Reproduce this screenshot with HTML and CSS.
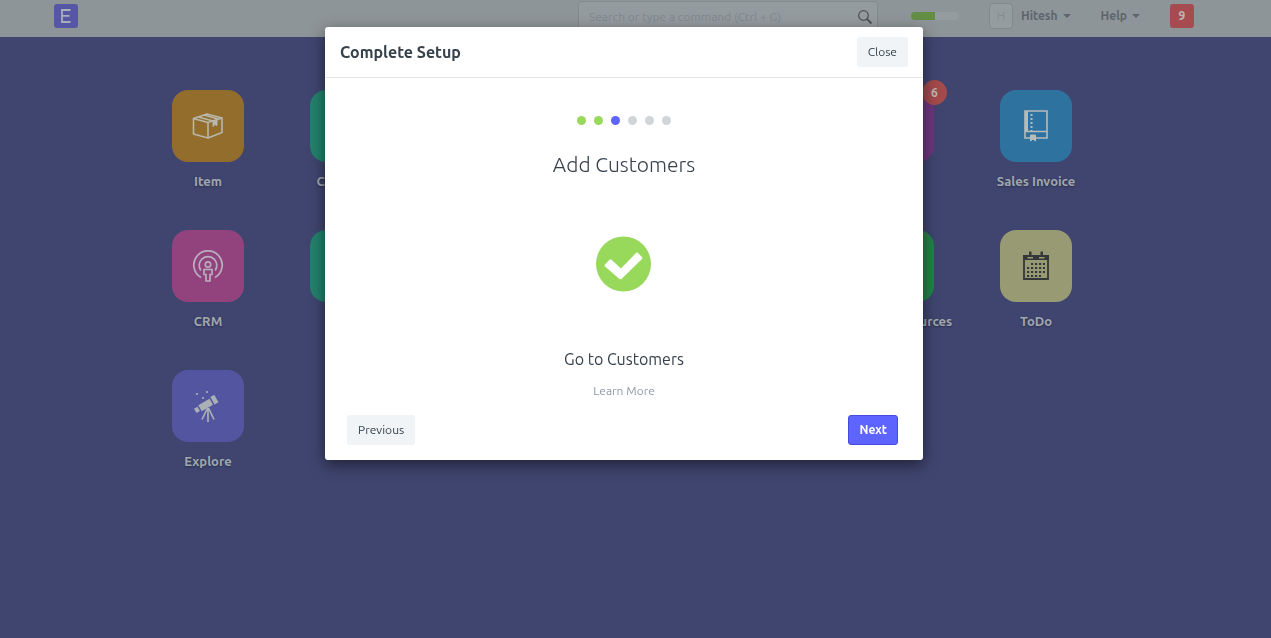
FILE: index.html
```html
<!DOCTYPE html>
<html lang="en">
<head>
<meta charset="utf-8">
<meta name="viewport" content="width=device-width, initial-scale=1">
<title>Complete Setup</title>
<link rel="stylesheet" href="styles.css">
</head>
<body>
<header class="navbar">
  <div class="navbar-inner">
    <a class="logo" href="#" aria-label="Home"><svg width="24" height="24" viewBox="0 0 24 24"><path d="M16.5 6H8v12h8.500M8 11.800h7.500" fill="none" stroke="#a9afbd" stroke-width="1.800"/></svg></a>
    <div class="search">
      <input class="search-input" type="text" placeholder="Search or type a command (Ctrl + G)" aria-label="Search or type a command">
      <svg class="search-icon" width="16" height="16" viewBox="0 0 16 16" fill="none" stroke="#4b5054"><circle cx="6.500" cy="6.500" r="4.800" stroke-width="1.200"/><path d="M10 10l4.500 4.500" stroke-width="1.800"/></svg>
    </div>
    <div class="progress"><div class="progress-bar" style="width:50%"></div></div>
    <button class="menu"><span class="avatar">H</span>Hitesh<span class="caret"></span></button>
    <button class="menu">Help<span class="caret"></span></button>
    <button class="notifications">9</button>
  </div>
</header>

<main class="desktop">
  <a class="app col-1" href="#">
    <span class="tile orange"><svg width="32" height="28" viewBox="0 0 32 28" fill="none" stroke="#b9b6ab" stroke-width="1.600" stroke-linejoin="round"><path d="M1.500 6.500L15 2l15 4v14.500L16 26 1.500 22zM1.500 6.500L16 10.500l14-4.500M16 10.500V26M6.500 5l14.500 4M12 3l14 4"/><path d="M21 9v5.500l2-2 2 1V7.500z" fill="#b9b6ab" stroke-width="1"/></svg></span>
    <span class="app-name">Item</span>
  </a>
  <a class="app col-2" href="#"><span class="tile teal"></span><span class="app-name">Customer</span></a>
  <a class="app col-6" href="#"><span class="tile purple"><span class="count">6</span></span></a>
  <a class="app col-7" href="#">
    <span class="tile blue"><svg width="26" height="34" viewBox="0 0 26 34" fill="none" stroke="#b7bcba" stroke-width="1.600"><path d="M7 29H2V2h22v27H13M2 22.500h22"/><path d="M3.500 2v20" stroke-width="3"/><path d="M8.500 5v17" stroke-width="2" stroke-dasharray="2 2"/><path d="M7.500 26h5v6l-2.500-2-2.500 2z" fill="#b7bcba" stroke-width="1"/></svg></span>
    <span class="app-name">Sales Invoice</span>
  </a>
  <a class="app col-1" href="#">
    <span class="tile pink"><svg width="32" height="34" viewBox="0 0 32 34" fill="none" stroke="#b9aebc" stroke-width="1.700"><path d="M9 28.500A14.200 14.200 0 1 1 23 28.500"/><path d="M8.800 21.500A8.800 8.800 0 1 1 23.200 21.500"/><circle cx="16" cy="15.500" r="2.700"/><path d="M12 20.500h8v5h-2V32h-4v-6.500h-2z"/></svg></span>
    <span class="app-name">CRM</span>
  </a>
  <a class="app col-2" href="#"><span class="tile teal"></span></a>
  <a class="app col-6" href="#"><span class="tile green"></span><span class="app-name">Human Resources</span></a>
  <a class="app col-7" href="#">
    <span class="tile khaki"><svg width="28" height="30" viewBox="0 0 28 30"><path d="M2 5h24v23H2z" fill="none" stroke="#35383b" stroke-width="1.800"/><path d="M1.100 4h4.400v3.500h5.500V4h6v3.500h5.500V4h4.400v5H1.100z" fill="#35383b"/><path d="M7 .5h2.500v5.500H7zM18.500 .5H21v5.500h-2.500z" fill="#35383b"/><path d="M9 13h14M5 17h18M5 21h18M5 25h14" stroke="#35383b" stroke-width="2.200" stroke-dasharray="2.200 1.800"/></svg></span>
    <span class="app-name">ToDo</span>
  </a>
  <a class="app col-1" href="#">
    <span class="tile indigo"><svg width="28" height="34" viewBox="0 0 28 34" fill="#abb0b5"><g transform="rotate(-30 14 14)"><path d="M-1 12h4v5h-4zM4.500 11h13v7h-13zM19 10h4.500v8.500H19z"/></g><path d="M14 19v14M13.500 19L8 30.500M14.500 19L20 30.500" fill="none" stroke="#abb0b5" stroke-width="1.700"/><circle cx="3" cy="5" r="1.100"/><circle cx="13" cy="3" r="1.100"/><circle cx="9" cy="9" r="1.100"/></svg></span>
    <span class="app-name">Explore</span>
  </a>
</main>

<div class="modal">
  <section class="dialog" role="dialog" aria-labelledby="dialog-title">
    <header class="dialog-header">
      <h1 class="dialog-title" id="dialog-title">Complete Setup</h1>
      <button class="btn">Close</button>
    </header>
    <div class="dialog-body">
      <div class="steps"><i class="dot done"></i><i class="dot done"></i><i class="dot active"></i><i class="dot"></i><i class="dot"></i><i class="dot"></i></div>
      <h2 class="step-title">Add Customers</h2>
      <svg class="check" width="56" height="56" viewBox="0 0 56 56"><circle cx="27.500" cy="28" r="27.500" fill="#98d85b"/><path d="M9 28.500l4.500-4.800q1-.8 2 0l9.500 8.800L40 17q1-.8 2 0l4 4q.8 1 0 2L25.500 43q-1 .8-2 0L9 30.500q-.8-1 0-2z" fill="#fff"/></svg>
      <a class="step-link" href="#">Go to Customers</a>
      <a class="learn-more" href="#">Learn More</a>
    </div>
    <footer class="dialog-footer">
      <button class="btn">Previous</button>
      <button class="btn primary">Next</button>
    </footer>
  </section>
</div>
</body>
</html>
```
FILE: styles.css
```css
* { box-sizing: border-box; }

body {
  margin: 0;
  min-height: 100vh;
  background: #3f456f;
  font: 12px/16px Ubuntu, "Noto Sans", "Open Sans", sans-serif;
  color: #36414c;
}

a { color: inherit; text-decoration: none; }
button { font: inherit; color: inherit; cursor: pointer; }

.navbar {
  padding: 0 23px 0 0;
  background: #8e9599;
}

.navbar-inner {
  display: flex;
  align-items: center;
  gap: 30px;
  max-width: 1140px;
  height: 37px;
  margin: 0 auto;
  padding-bottom: 5px;
}

.logo {
  display: flex;
  margin-right: auto;
  border-radius: 3px;
  background: #5556a4;
}

.search { position: relative; }

.search-input {
  display: block;
  width: 300px;
  height: 30px;
  padding: 0 36px 0 10px;
  border: 1px solid #848b8f;
  border-radius: 3px;
  background: #949b9f;
  font: inherit;
}

.search-input::placeholder { color: #80888c; opacity: 1; }

.search-icon {
  position: absolute;
  top: 8px;
  right: 5px;
}

.progress {
  width: 48px;
  height: 8px;
  margin-left: 3px;
  border-radius: 4px;
  overflow: hidden;
  background: #959c9f;
}

.progress-bar { height: 100%; background: #648d46; }

.menu {
  display: flex;
  align-items: center;
  padding: 0;
  border: 0;
  background: none;
  color: #5d666d;
  font-weight: 700;
}

.avatar {
  width: 24px;
  height: 26px;
  margin-right: 8px;
  border: 1px solid #838a8e;
  border-radius: 4px;
  background: #959c9f;
  color: #858c90;
  font-weight: 400;
  line-height: 24px;
}

.caret {
  margin-left: 5px;
  border: 4px solid transparent;
  border-top-color: #5d666d;
  border-bottom: 0;
}

.notifications {
  width: 24px;
  height: 24px;
  padding: 0;
  border: 0;
  border-radius: 3px;
  background: #a64b50;
  color: #b9b9b5;
  font-weight: 700;
}

.desktop {
  display: grid;
  grid-template-columns: repeat(7, 1fr);
  grid-auto-rows: 140px;
  max-width: 993px;
  margin: 0 auto;
  padding: 53px 27px 0 0;
}

.col-1 { grid-column: 1; }
.col-2 { grid-column: 2; }
.col-6 { grid-column: 6; }
.col-7 { grid-column: 7; }

.app {
  display: flex;
  flex-direction: column;
  align-items: center;
  gap: 11px;
}

.tile {
  position: relative;
  display: flex;
  align-items: center;
  justify-content: center;
  width: 72px;
  height: 72px;
  border-radius: 16px;
}

.orange { background: #936d2c; }
.teal { background: #23806c; }
.purple { background: #6b367d; }
.blue { background: #2e73a0; }
.pink { background: #92437e; }
.green { background: #218348; }
.khaki { background: #979a73; }
.indigo { background: #5355a0; }

.count {
  position: absolute;
  top: -10px;
  right: -13px;
  width: 25px;
  height: 25px;
  border-radius: 50%;
  background: #a34a4c;
  color: #b9b9b5;
  font-weight: 700;
  line-height: 25px;
  text-align: center;
}

.app-name {
  color: #a1a8ad;
  font-size: 13px;
  font-weight: 700;
  text-shadow: 0 1px 2px #292d4c;
  white-space: nowrap;
}

.modal {
  position: fixed;
  inset: 0;
  padding: 27px 23px 0 0;
}

.dialog {
  max-width: 598px;
  margin: 0 auto;
  border-radius: 3px;
  background: #fff;
  box-shadow: 0 5px 15px rgba(0, 0, 0, 0.5);
}

.dialog-header {
  display: flex;
  align-items: center;
  justify-content: space-between;
  padding: 10px 15px;
  border-bottom: 1px solid #e0e6e8;
}

.dialog-title { margin: 0; font-size: 16px; line-height: 20px; }

.btn {
  height: 30px;
  padding: 0 11px;
  border: 0;
  border-radius: 3px;
  background: #f0f4f7;
}

.primary {
  padding: 0 10px;
  border: 1px solid #444bdf;
  background: #5e64ff;
  color: #fff;
  font-weight: 700;
}

.dialog-body {
  display: flex;
  flex-direction: column;
  align-items: center;
  padding-top: 38px;
}

.steps { display: flex; gap: 8px; }

.dot { width: 9px; height: 9px; border-radius: 50%; background: #d1d5d8; }
.done { background: #98d85b; }
.active { background: #5e64ff; }

.step-title {
  margin: 26px 0 0;
  font-size: 21px;
  font-weight: 300;
  line-height: 26px;
}

.check { margin-top: 59px; }

.step-link { margin-top: 57px; font-size: 16px; line-height: 20px; }

.learn-more { margin-top: 14px; color: #8d99a6; }

.dialog-footer {
  display: flex;
  justify-content: space-between;
  padding: 16px 25px 15px 22px;
}
```
